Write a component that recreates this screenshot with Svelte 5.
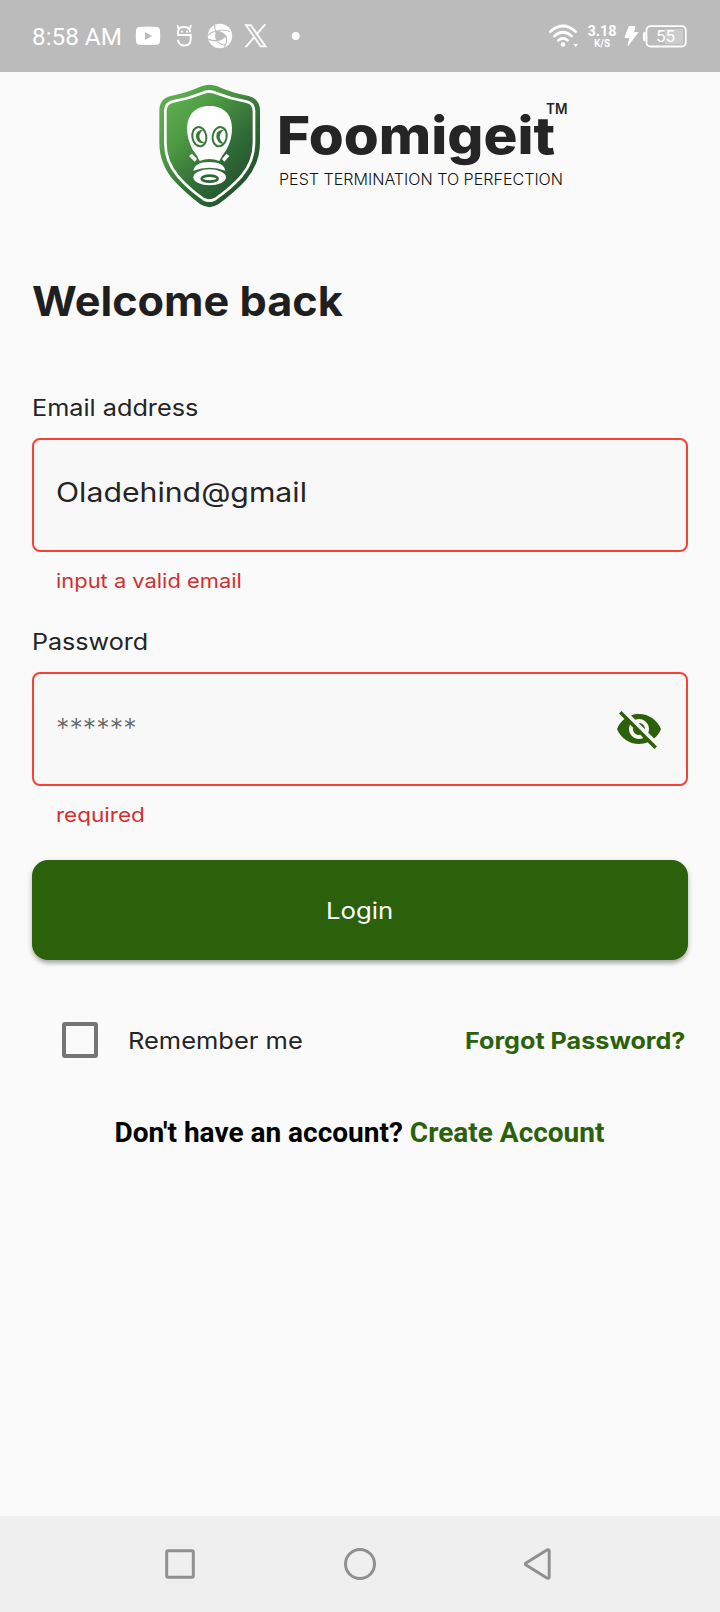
<script>
  let email = $state('Oladehind@gmail');
  let remember = $state(false);

  function fit(node, width) {
    node.style.transform = `scaleX(${width / node.offsetWidth})`;
  }
</script>

<div class="screen">
  <header class="status">
    <span class="clock"><span class="line" use:fit={90}>8:58 AM</span></span>
    <svg class="left-icons" width="176" height="28" viewBox="0 0 176 28" fill="#fff">
      <path fill-rule="evenodd" d="M4 5Q12 4 20 5Q24 5 24 9Q24.500 14 24 19Q24 22.500 20 22.700Q12 23.500 4 22.700Q0 22.500 0 19Q-.5 14 0 9Q0 5 4 5ZM9 10V18L16 14Z" />
      <g fill="none" stroke="#fff" stroke-width="1.900" stroke-linecap="round">
        <path d="M54 9.500Q53.500 5 48 5Q42 5 42 10V13H54.700V17.500Q54.500 23.500 48.500 23.500Q43 23.500 42 18.500M42.500 6L41.700 4M54 6L54.800 4" />
        <path d="M46 9.500v.2M51 9.500v.2" stroke-width="2.200" />
      </g>
      <circle cx="84" cy="14" r="12.200" />
      <g fill="none" stroke="#bbb" stroke-width="1.100">
        <path d="M80 9.500Q75 9.500 72 13.500M80 9.500Q85 6.500 94 9.500M90 14Q92 20 88 25.500M80.500 18.500Q75 19 72.500 17M80.500 18.500Q84 23 90 23M80 9.500Q78 6 79 3" />
        <path d="M80 9.500Q86 9 90 14Q86 18.500 80.500 18.500Q79 14 80 9.500Z" fill="#bbb" />
      </g>
      <path transform="translate(108.500 2.500) scale(.94)" d="M14.200 10.100L22.900 0H20.800L13.300 8.800L7.300 0H.3L9.500 13.300L.3 24H2.400L10.400 14.700L16.800 24H23.800ZM11.400 13.400L10.400 12.100L3.100 1.600H6.300L12.200 10.100L13.200 11.400L20.800 22.500H17.600Z" stroke="#fff" stroke-width=".5" />
      <circle cx="159.700" cy="14" r="4" />
    </svg>
    <span class="grow"></span>
    <svg class="wifi" width="30" height="26" viewBox="0 0 30 26" fill="none" stroke="#fff" stroke-width="2.700" stroke-linecap="round">
      <path d="M2.500 8.500Q15 -2.500 27.500 8.500M6.500 13Q15 5.500 23.500 13M10.500 17.300Q15 13.500 19.500 17.300" />
      <circle cx="15" cy="21.500" r="2.300" fill="#fff" stroke="none" />
      <path d="M25.500 21h4.500l-2.200 3z" fill="#fff" stroke="none" />
    </svg>
    <span class="speed"><b>3.18</b><small>K/S</small></span>
    <svg class="battery" width="63" height="26" viewBox="0 0 63 26">
      <path d="M5 1.500H11L9.500 7.500H14L4 20.500L6 12.500H1Z" fill="#fff" stroke="#fff" stroke-linejoin="round" />
      <path d="M21.500 6.500Q19 6.500 19 9V14Q19 16.500 21.500 16.500Z" fill="#fff" />
      <rect x="41" y="4" width="18" height="15" fill="#ccc" />
      <rect x="22.500" y="1.200" width="39.300" height="20.300" rx="4" fill="none" stroke="#fff" stroke-width="1.800" />
      <text x="41.500" y="17.300" text-anchor="middle" fill="#fff" font-family="Roboto, sans-serif" font-size="17">55</text>
    </svg>
  </header>

  <main>
    <svg class="logo" width="430" height="140" viewBox="0 0 430 140">
      <defs>
        <linearGradient id="shade" x1=".12" y1=".14" x2=".75" y2=".85">
          <stop offset="0" stop-color="#5cad4e" />
          <stop offset=".3" stop-color="#4d9a44" />
          <stop offset=".72" stop-color="#2f6a37" />
          <stop offset="1" stop-color="#275730" />
        </linearGradient>
      </defs>
      <g transform="scale(.33333)">
        <path fill="url(#shade)" d="M178 26Q190 26 202 31Q245 51 296 60Q330 68 330 104V200Q330 262 288 312Q255 348 205 385Q178 402 151 385Q103 348 70 312Q28 262 28 200V104Q28 68 62 60Q111 51 154 31Q166 26 178 26Z" />
        <path fill="none" stroke="#fff" stroke-width="8" d="M178 46Q188 46 198 51Q243 69 290 77Q312 82 312 106V200Q312 256 274 301Q244 335 196 369Q178 379 160 369Q113 335 84 301Q46 256 46 200V106Q46 82 67 77Q113 69 158 51Q168 46 178 46Z" />
        <path fill="#fff" d="M168 90H189Q243 98 246 154Q247 190 229 222Q216 237 208 255Q178 243 149 255Q142 237 128 221Q111 190 111 154Q115 98 168 90Z" />
        <g fill="#fff" stroke="#39783b" stroke-width="6">
          <ellipse cx="148" cy="182" rx="21" ry="29" transform="rotate(-10 148 182)" />
          <ellipse cx="209" cy="182" rx="21" ry="29" transform="rotate(10 209 182)" />
        </g>
        <path fill="#39783b" d="M162 161Q135 161 138 184Q144 207 166 200Q150 197 148 182Q148 168 162 161ZM223 161Q196 161 199 184Q205 207 222 202Q210 195 209 182Q211 168 223 161Z" />
        <path fill="#fff" d="M117 240L126 233L141 249L134 257ZM238 240L229 233L216 249L223 257ZM130 284Q134 258 178 258Q222 258 226 284Q178 266 130 284Z" />
        <ellipse cx="179" cy="304" rx="49" ry="24" fill="#fff" />
        <ellipse cx="179" cy="308" rx="24" ry="9" fill="#fff" stroke="#2f6636" stroke-width="8" />
      </g>
      <g fill="#252525" font-family="Inter, sans-serif">
        <text x="127" y="78" font-size="52" font-weight="800" textLength="278" lengthAdjust="spacingAndGlyphs">Foomigeit</text>
        <text x="396" y="37.500" font-size="14.500" font-weight="600" textLength="21.500" lengthAdjust="spacingAndGlyphs">TM</text>
        <text x="129" y="109" font-size="15.300" font-weight="300" fill="#111" textLength="284" lengthAdjust="spacingAndGlyphs">PEST TERMINATION TO PERFECTION</text>
      </g>
    </svg>

    <h1><span class="line" use:fit={311}>Welcome back</span></h1>

    <label class="caption" for="email"><span class="line" use:fit={166}>Email address</span></label>
    <div class="field" id="email"><span class="line" use:fit={251}>{email}</span></div>
    <p class="error"><span class="line" use:fit={186}>input a valid email</span></p>

    <label class="caption second" for="password"><span class="line" use:fit={116}>Password</span></label>
    <div class="field" id="password">
      <span class="line hint" use:fit={81}>******</span>
      <svg class="eye" width="48" height="48" viewBox="0 0 24 24" fill="#2b610b">
        <path d="M12 7c2.760 0 5 2.240 5 5 0 .65-.13 1.260-.36 1.830l2.920 2.920c1.510-1.260 2.700-2.890 3.430-4.750-1.730-4.390-6-7.500-11-7.500-1.400 0-2.740.25-3.980.7l2.160 2.160C10.740 7.130 11.350 7 12 7zM2 4.270l2.280 2.280.46.46C3.080 8.300 1.780 10.020 1 12c1.730 4.390 6 7.500 11 7.500 1.550 0 3.030-.3 4.380-.84l.42.42L19.730 22 21 20.730 3.270 3 2 4.270zM7.530 9.800l1.550 1.550c-.05.21-.08.43-.08.65 0 1.660 1.340 3 3 3 .22 0 .44-.03.65-.08l1.550 1.550c-.67.33-1.410.53-2.200.53-2.760 0-5-2.240-5-5 0-.79.2-1.530.53-2.200zm4.310-.78l3.150 3.150.02-.16c0-1.660-1.340-3-3-3l-.17.01z" />
      </svg>
    </div>
    <p class="error"><span class="line" use:fit={89}>required</span></p>

    <button class="login"><span class="line" use:fit={67.5}>Login</span></button>

    <div class="options">
      <button class="box" aria-label="Remember me" aria-pressed={remember} onclick={() => (remember = !remember)}></button>
      <span class="remember"><span class="line" use:fit={175}>Remember me</span></span>
      <a class="forgot" href="#forgot"><span class="line" use:fit={221}>Forgot Password?</span></a>
    </div>

    <p class="signup"><span class="line" use:fit={490}>Don't have an account? <a href="#create">Create Account</a></span></p>
  </main>

  <nav>
    <svg width="32" height="32" viewBox="0 0 32 32"><rect x="2.700" y="2.700" width="26.600" height="26.600" rx="1.500" /></svg>
    <svg width="32" height="32" viewBox="0 0 32 32"><circle cx="16" cy="16" r="14.500" /></svg>
    <svg width="32" height="32" viewBox="0 0 32 32"><path d="M22.500 2.300Q25.200 .8 25.200 3V29Q25.200 31.200 22.500 29.700L2 17Q.5 16 2 15Z" /></svg>
  </nav>
</div>

<style>
  :global(body) { margin: 0; background: #fafafa; }
  .screen { width: 720px; height: 1612px; display: flex; flex-direction: column; background: #fafafa; color: #242424; font-family: Inter, sans-serif; overflow: hidden; }
  .line { display: inline-block; white-space: nowrap; transform-origin: 0 50%; }
  .status { height: 72px; flex: none; display: flex; align-items: center; background: #bbb; padding: 0 33px 0 32px; box-sizing: border-box; color: #fff; font-family: Roboto, sans-serif; }
  .clock { width: 104px; font-size: 24px; line-height: 28px; padding-top: 1px; }
  .left-icons { overflow: visible; }
  .grow { flex: 1; }
  .wifi { margin-right: 9px; }
  .speed { width: 30px; margin-right: 7px; display: flex; flex-direction: column; align-items: center; padding-top: 2px; }
  .speed b { font-size: 14.500px; line-height: 13px; font-weight: 700; }
  .speed small { font-size: 10px; line-height: 12px; font-weight: 700; }
  .battery { margin-top: 3px; }
  main { flex: 1; display: flex; flex-direction: column; padding: 4px 32px 0; }
  .logo { margin-left: 118px; flex: none; }
  h1 { margin: 61px 0 0; height: 48px; line-height: 48px; font-size: 41px; font-weight: 700; color: #1f1f1f; }
  .caption { margin-top: 68px; height: 29px; line-height: 29px; font-size: 22.500px; margin-bottom: 16px; }
  .caption.second { margin-top: 33px; }
  .field { height: 114px; box-sizing: border-box; border: 2px solid #f44336; border-radius: 8px; background: #f8f8f8; padding: 0 22px 6px; display: flex; align-items: center; justify-content: space-between; font-size: 26.500px; flex: none; }
  .hint { color: #666; font-weight: 300; padding-top: 3px; }
  .eye { position: relative; left: -1px; top: 3px; }
  .error { margin: 16px 0 0 24px; height: 26px; line-height: 26px; font-size: 20px; color: #d32f2f; }
  .login { margin-top: 32px; height: 100px; flex: none; border: 0; border-radius: 16px; background: #2b610b; color: #fff; font: 22.500px/100px Inter, sans-serif; padding: 1px 0 0 294px; text-align: left; box-shadow: 0 4px 5px -1px rgba(0,0,0,.3), 0 1px 6px rgba(0,0,0,.12); }
  .options { margin-top: 62px; height: 36px; display: flex; align-items: center; padding-left: 30px; font-size: 23px; line-height: 36px; }
  .box { flex: none; width: 36px; height: 36px; padding: 0; border: 4px solid #757575; border-radius: 3px; background: transparent; }
  .remember { flex: none; margin-left: 30px; width: 337px; padding-top: 1px; }
  .forgot { flex: none; width: 222px; padding-top: 1px; font-weight: 700; color: #2b610b; text-decoration: none; }
  .signup { margin: 58px 0 0 82.500px; height: 34px; line-height: 34px; font-family: Roboto, sans-serif; font-size: 28px; font-weight: 700; color: #000; }
  .signup a { color: #2b610b; text-decoration: none; }
  nav { height: 96px; flex: none; background: #efefef; display: flex; align-items: center; justify-content: space-between; padding: 0 164px; }
  nav svg { fill: none; stroke: #909090; stroke-width: 3; stroke-linejoin: round; }
</style>
